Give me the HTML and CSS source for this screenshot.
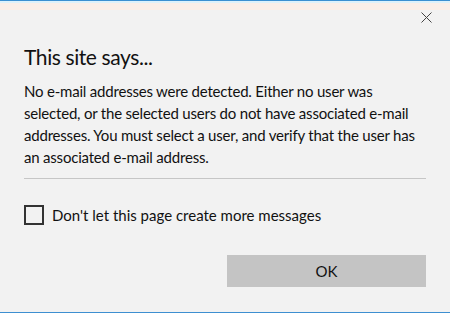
FILE: index.html
```html
<!DOCTYPE html>
<html lang="en">
<head>
  <meta charset="UTF-8" />
  <title>This site says...</title>
  <link rel="stylesheet" href="styles.css">
</head>
<body>
  <div class="dialog">
    <div class="topbar">
      <button class="close-btn" aria-label="Close">
        <svg width="11" height="11" viewBox="0 0 11 11"><path d="M0.5 0.5L10.5 10.5M10.5 0.5L0.5 10.5" stroke="#444" stroke-width="1" fill="none"/></svg>
      </button>
    </div>
    <div class="content">
      <h1 class="title">This site says...</h1>
      <p class="message">No e-mail addresses were detected. Either no user was selected, or the selected users do not have associated e-mail addresses. You must select a user, and verify that the user has an associated e-mail address.</p>
      <hr class="divider">
      <label class="check-row">
        <span class="checkbox"></span>
        <span>Don't let this page create more messages</span>
      </label>
      <div class="actions">
        <button class="ok-btn">OK</button>
      </div>
    </div>
  </div>
</body>
</html>
```
FILE: styles.css
```css
html, body {
  margin: 0;
  height: 100%;
}
body {
  font-family: Lato, "Open Sans", sans-serif;
  background-color: #f2f2f2;
  color: #111;
}
.dialog {
  height: 313px;
  box-sizing: border-box;
  border-top: 1px solid #3d8fd1;
  border-bottom: 1px solid #3d8fd1;
  background: linear-gradient(#dff1fb 0, #dff1fb 2px, #fbeee8 2px, #fbeee8 9px, #f2f2f2 9px);
  display: flex;
  flex-direction: column;
}
.topbar {
  display: flex;
  justify-content: flex-end;
  padding: 11px 18px 0 0;
}
.close-btn {
  background: none;
  border: none;
  padding: 0;
  width: 11px;
  height: 11px;
  cursor: pointer;
}
.close-btn svg {
  display: block;
}
.content {
  padding: 0 24px;
}
.title {
  font-size: 21px;
  letter-spacing: -0.4px;
  font-weight: normal;
  margin: 19px 0 0;
  line-height: 30px;
}
.message {
  font-size: 15px;
  letter-spacing: -0.2px;
  line-height: 22px;
  margin: 8px 0 0;
}
.divider {
  border: none;
  border-top: 1px solid #c6c6c6;
  margin: 10px 0 0;
}
.check-row {
  display: flex;
  align-items: center;
  gap: 8px;
  margin-top: 26px;
  font-size: 15px;
}
.checkbox {
  width: 16px;
  height: 16px;
  border: 2px solid #333;
}
.actions {
  display: flex;
  justify-content: flex-end;
  margin-top: 30px;
}
.ok-btn {
  width: 199px;
  height: 32px;
  border: none;
  background-color: #c4c4c4;
  font-family: inherit;
  font-size: 15px;
  color: #111;
}
```
